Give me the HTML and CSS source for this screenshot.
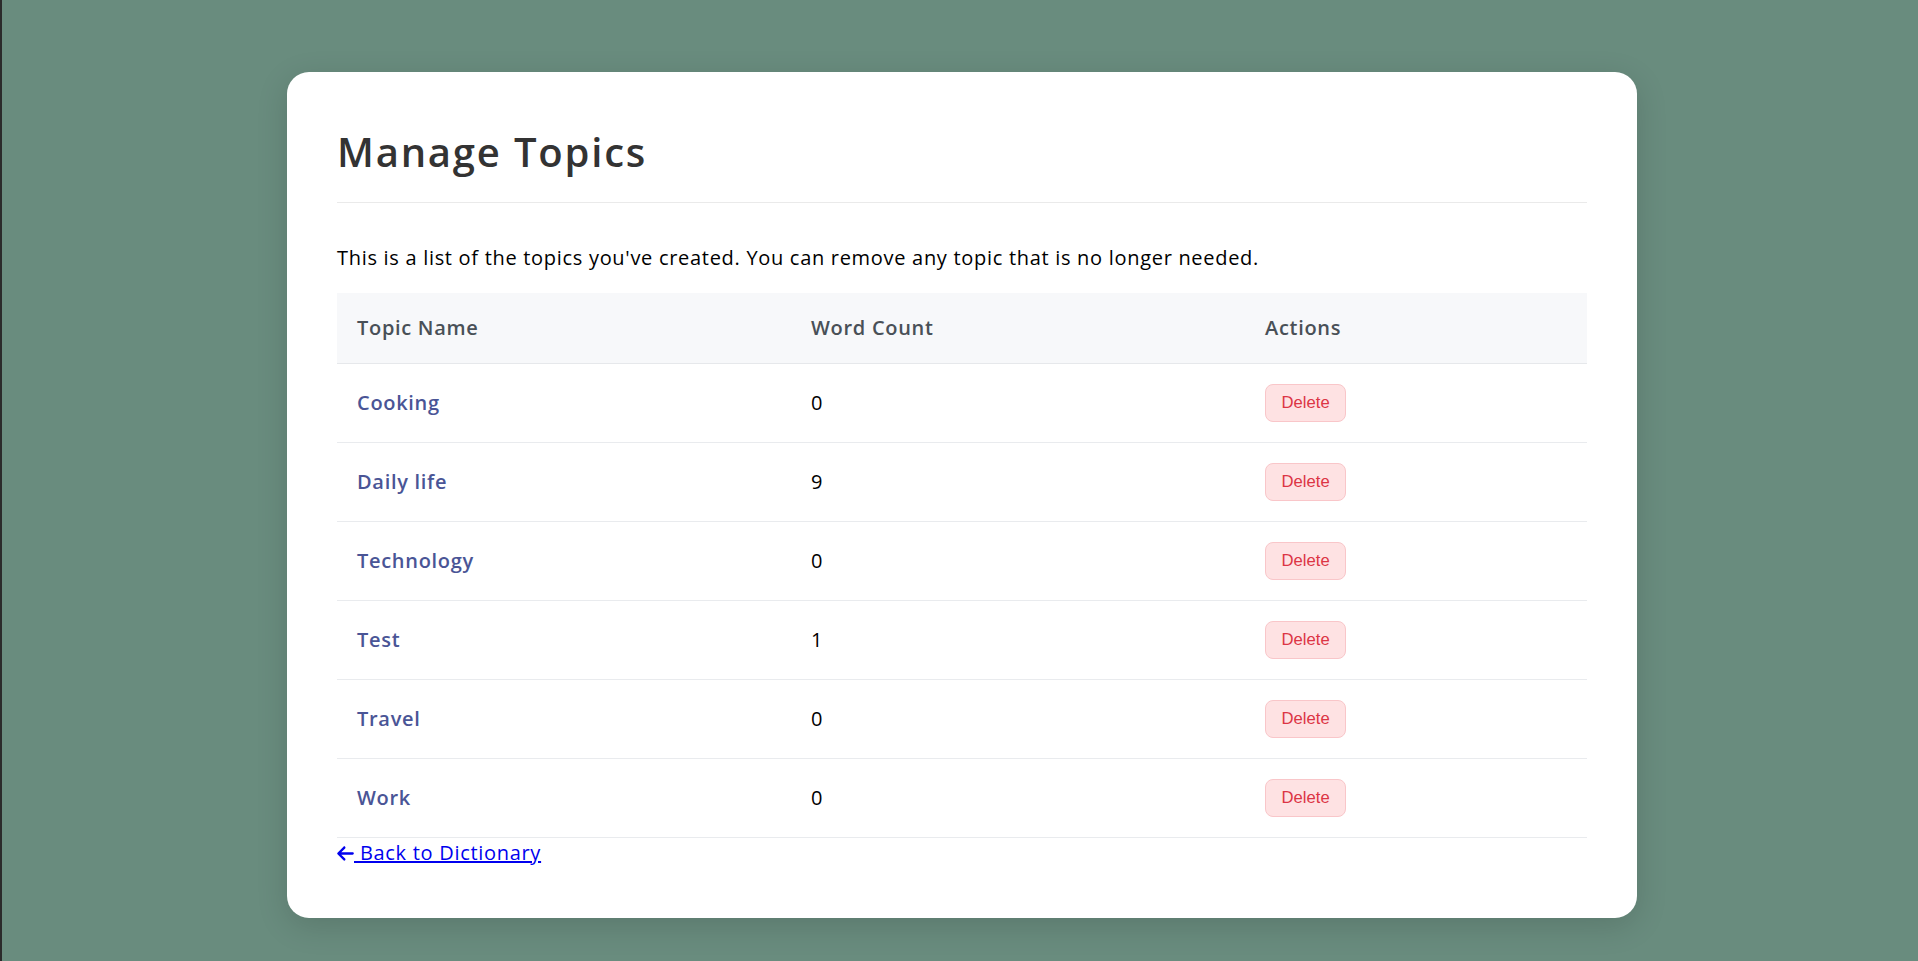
FILE: index.html
```html
<!DOCTYPE html>
<html lang="en">
<head>
<meta charset="utf-8">
<title>Manage Topics</title>
<link rel="stylesheet" href="styles.css">
</head>
<body>
  <main class="card">
    <h1 class="title">Manage Topics</h1>
    <hr class="divider">
    <p class="intro">This is a list of the topics you've created. You can remove any topic that is no longer needed.</p>
    <table class="topics">
      <colgroup>
        <col class="col-name">
        <col class="col-count">
        <col class="col-actions">
      </colgroup>
      <thead>
        <tr>
          <th>Topic Name</th>
          <th>Word Count</th>
          <th>Actions</th>
        </tr>
      </thead>
      <tbody>
        <tr>
          <td><a class="topic-link" href="#">Cooking</a></td>
          <td>0</td>
          <td><button class="btn-delete" type="button">Delete</button></td>
        </tr>
        <tr>
          <td><a class="topic-link" href="#">Daily life</a></td>
          <td>9</td>
          <td><button class="btn-delete" type="button">Delete</button></td>
        </tr>
        <tr>
          <td><a class="topic-link" href="#">Technology</a></td>
          <td>0</td>
          <td><button class="btn-delete" type="button">Delete</button></td>
        </tr>
        <tr>
          <td><a class="topic-link" href="#">Test</a></td>
          <td>1</td>
          <td><button class="btn-delete" type="button">Delete</button></td>
        </tr>
        <tr>
          <td><a class="topic-link" href="#">Travel</a></td>
          <td>0</td>
          <td><button class="btn-delete" type="button">Delete</button></td>
        </tr>
        <tr>
          <td><a class="topic-link" href="#">Work</a></td>
          <td>0</td>
          <td><button class="btn-delete" type="button">Delete</button></td>
        </tr>
      </tbody>
    </table>
    <div class="back"><a class="back-link" href="#"><svg class="back-icon" viewBox="0 0 448 512" aria-hidden="true"><path fill="currentColor" d="M9.4 233.4c-12.5 12.5-12.5 32.8 0 45.3l160 160c12.5 12.5 32.8 12.5 45.3 0s12.5-32.8 0-45.3L109.2 288 416 288c17.7 0 32-14.3 32-32s-14.3-32-32-32l-306.7 0L214.6 118.6c12.5-12.5 12.5-32.8 0-45.3s-32.8-12.5-45.3 0l-160 160z"/></svg> Back to Dictionary</a></div>
  </main>
</body>
</html>
```

FILE: styles.css
```css
* {
  box-sizing: border-box;
}

html {
  background: #698c7e;
}

body {
  margin: 0;
  min-height: 100vh;
  padding: 72px 0 40px 4px;
  border-left: 2px solid #2b2b2b;
  background: #698c7e;
  font-family: "Open Sans", "Liberation Sans", sans-serif;
  font-size: 20px;
  letter-spacing: 0.7px;
  color: #000;
}

.card {
  width: 1350px;
  margin: 0 auto;
  padding: 50px;
  background: #fff;
  border-radius: 22px;
  box-shadow: 0 8px 32px rgba(0, 0, 0, 0.14);
}

.title {
  margin: 0 0 20px;
  font-size: 40px;
  line-height: 60px;
  font-weight: 600;
  letter-spacing: 1.8px;
  color: #333;
}

.divider {
  margin: 0 0 40px;
  border: 0;
  border-top: 1px solid #eaeaea;
}

.intro {
  margin: 0 0 20px;
  line-height: 30px;
  color: #000;
}

.topics {
  width: 100%;
  border-collapse: collapse;
  table-layout: fixed;
}

.col-name { width: 454px; }
.col-count { width: 454px; }
.col-actions { width: 342px; }

.topics th {
  padding: 20px;
  line-height: 30px;
  text-align: left;
  font-weight: 600;
  color: #495057;
  background: #f7f8fa;
  border-bottom: 1px solid #e6e8eb;
}

.topics td {
  padding: 20px;
  line-height: 30px;
  vertical-align: middle;
  border-bottom: 1px solid #e9ebee;
}

.topic-link {
  color: #4a5596;
  font-weight: 600;
  text-decoration: none;
}

.btn-delete {
  display: inline-block;
  height: 38px;
  padding: 8px 15.5px;
  font-family: "Liberation Sans", Arial, sans-serif;
  font-size: 16.67px;
  line-height: 20px;
  letter-spacing: 0;
  color: #dc3545;
  background: #fee2e3;
  border: 1px solid #f9c6c9;
  border-radius: 8px;
  vertical-align: middle;
}

.back {
  line-height: 30px;
}

.back-link {
  color: #0000ee;
  text-decoration: underline;
}

.back-icon {
  width: 17px;
  height: 19px;
  vertical-align: -3px;
}
```
